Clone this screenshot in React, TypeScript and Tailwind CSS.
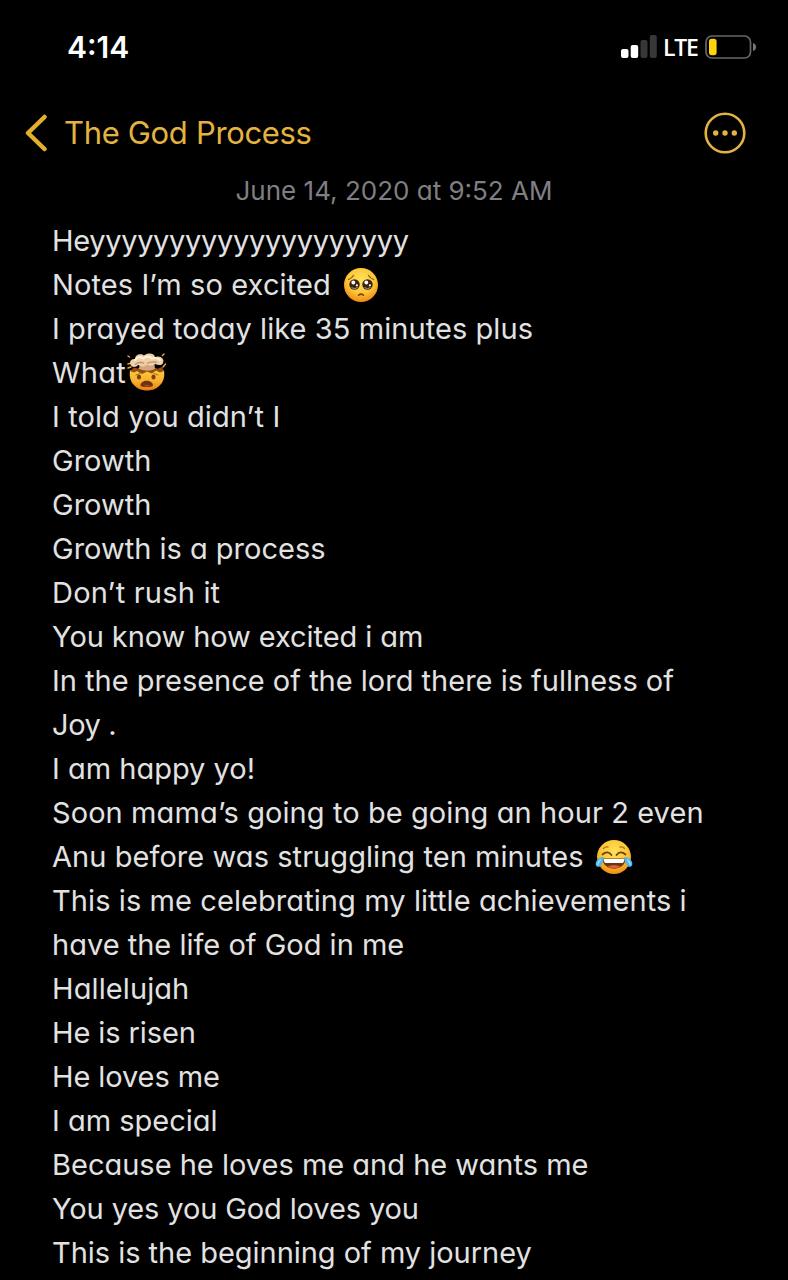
import { useId, type ReactNode } from 'react';

function Face({ children }: { children: ReactNode }) {
  const id = useId();
  return (
    <svg viewBox="0 0 36 36" className="inline-block h-9 w-9 shrink-0 overflow-visible">
      <defs>
        <radialGradient id={id} cx="0.5" cy="0.35" r="0.65">
          <stop offset="0" stopColor="#ffe25a" />
          <stop offset="0.6" stopColor="#fcc637" />
          <stop offset="1" stopColor="#f08a12" />
        </radialGradient>
      </defs>
      <circle cx="18" cy="18" r="17" fill={`url(#${id})`} />
      {children}
    </svg>
  );
}

function Pleading() {
  return (
    <Face>
      <path d="M5.500 12.500Q8.500 11.500 10.500 8.500M30.500 12.500Q27.500 11.500 25.500 8.500" stroke="#8a5210" strokeWidth="1.300" fill="none" strokeLinecap="round" />
      <circle cx="11.500" cy="17.500" r="5.200" fill="#3a2410" />
      <circle cx="24.500" cy="17.500" r="5.200" fill="#3a2410" />
      <circle cx="10.300" cy="15.500" r="1.900" fill="#fff" />
      <circle cx="23.300" cy="15.500" r="1.900" fill="#fff" />
      <circle cx="13.900" cy="18.300" r="1.100" fill="#fff" />
      <circle cx="26.900" cy="18.300" r="1.100" fill="#fff" />
      <path d="M8.500 20.500Q11.500 23 14.500 20.500M21.500 20.500Q24.500 23 27.500 20.500" stroke="#a99c90" strokeWidth="1" fill="none" />
      <path d="M15.500 28.300Q18 26 20.500 28.300" stroke="#7a3f10" strokeWidth="1.500" fill="none" strokeLinecap="round" />
    </Face>
  );
}

function MindBlown() {
  const id = useId();
  return (
    <svg viewBox="0 0 40 38" className="inline-block h-[38px] w-10 shrink-0 overflow-visible">
      <defs>
        <linearGradient id={id} x1="0" y1="0" x2="0" y2="1">
          <stop offset="0" stopColor="#ffcf40" />
          <stop offset="0.600" stopColor="#f9ae2b" />
          <stop offset="1" stopColor="#e57c12" />
        </linearGradient>
      </defs>
      <path d="M2 16.500Q20 11 36 16.500C38 28 30 36.500 19 36.500S0 28 2 16.500Z" fill={`url(#${id})`} />
      <path d="M2 17L6 13.500L11 15L15 12L24 12L29 15L34 13L36 17L32 18.500L28 16.500L24 19.500L19 17.500L14 20L9 17L6 18.500Z" fill="#8e4c16" />
      <path d="M12 7H26L27 15Q20 18.500 11 15Z" fill="#d5a67c" />
      <path d="M6 13C0 12 1 4.500 7 5C7 0.500 13-1 16 1.500C20-1.500 26-1 27 3C32 1 37 4.500 35 9C34 12 30 11 27 10C24 13 20 11 18 11C15 14 12 11.500 10 11Q9 13 6 13Z" fill="#edcfaa" />
      <path d="M7 6Q11 1.500 15 4.500Q20 0.500 24 4.500Q29 3 32 6" stroke="#fff0d4" strokeWidth="2" fill="none" strokeLinecap="round" />
      <path d="M7 10.500Q12 7 16 9.500M19 9.500Q24 7 29 8.500" stroke="#bf8960" strokeWidth="1.300" fill="none" />
      <path d="M0 2L1.500 3M36 0L34.500 1.500M0 14L3 13M35 13L37.500 10M0 10L1.500 9.500" stroke="#e8a33a" strokeWidth="1.500" strokeLinecap="round" />
      <path d="M8 21L12 19.500M26 19.500L30 21" stroke="#b06a18" strokeWidth="1" strokeLinecap="round" />
      <ellipse cx="11" cy="23" rx="2.100" ry="2.500" fill="#74400f" />
      <ellipse cx="25.500" cy="23" rx="2.100" ry="2.500" fill="#74400f" />
      <path d="M12.500 31.500C12.500 25 25 25 25 31.500C24 33.500 13.500 33.500 12.500 31.500Z" fill="#6d3413" />
      <path d="M15 31.800Q18.800 30 22.500 31.800Q18.800 33.300 15 31.800Z" fill="#a9502a" />
    </svg>
  );
}

function TearsOfJoy() {
  return (
    <Face>
      <path d="M7.500 9.500Q9 7.500 12 8M28.500 9.500Q27 7.500 24 8" stroke="#b77315" strokeWidth="1.300" fill="none" strokeLinecap="round" />
      <path d="M6.500 15.500Q11.500 11 15.500 16M20.500 16Q24.500 11 29.500 15.500" stroke="#70410f" strokeWidth="1.800" fill="none" strokeLinecap="round" />
      <path d="M6.500 19.500H29.500C29.500 33 6.500 33 6.500 19.500Z" fill="#70340f" />
      <path d="M7.500 20H28.500Q28.500 22.500 27 24H9Q7.500 22.500 7.500 20Z" fill="#fff" />
      <path d="M11.500 27.500Q18 24.500 24.500 27.500Q18 31.500 11.500 27.500Z" fill="#d9603a" />
      <path d="M7.500 18C2 18.500-1.500 23 0 26.500C2 29.500 7 28 7.500 18Z" fill="#4db7ee" />
      <path d="M28.500 18C34 18.500 37.500 23 36 26.500C34 29.500 29 28 28.500 18Z" fill="#4db7ee" />
      <path d="M1.800 25.500Q2 23 4.500 21M34.200 25.500Q34 23 31.500 21" stroke="#a6e3ff" strokeWidth="1.200" fill="none" strokeLinecap="round" />
    </Face>
  );
}

type Line = { text: string; tracking?: string; after?: ReactNode; gap?: string };

const lines: Line[] = [
  { text: 'Heyyyyyyyyyyyyyyyyyyyy', tracking: 'tracking-[-0.33px]' },
  { text: 'Notes I’m so excited', tracking: 'tracking-[0.1px]', after: <Pleading />, gap: 'gap-3' },
  { text: 'I prayed today like 35 minutes plus', tracking: 'tracking-[0.07px]' },
  { text: 'What', tracking: 'tracking-[0.25px]', after: <MindBlown />, gap: 'gap-0.5' },
  { text: 'I told you didn’t I', tracking: 'tracking-[0.1px]' },
  { text: 'Growth' },
  { text: 'Growth' },
  { text: 'Growth is a process' },
  { text: 'Don’t rush it', tracking: 'tracking-[0.2px]' },
  { text: 'You know how excited i am', tracking: 'tracking-[-0.08px]' },
  { text: 'In the presence of the lord there is fullness of' },
  { text: 'Joy .', tracking: 'tracking-[-0.4px]' },
  { text: 'I am happy yo!' },
  { text: 'Soon mama’s going to be going an hour 2 even', tracking: 'tracking-[0.08px]' },
  { text: 'Anu before was struggling ten minutes', tracking: 'tracking-[0.06px]', after: <TearsOfJoy />, gap: 'gap-3' },
  { text: 'This is me celebrating my little achievements i', tracking: 'tracking-[0.085px]' },
  { text: 'have the life of God in me' },
  { text: 'Hallelujah', tracking: 'tracking-[0.1px]' },
  { text: 'He is risen', tracking: 'tracking-[-0.1px]' },
  { text: 'He loves me', tracking: 'tracking-[-0.1px]' },
  { text: 'I am special' },
  { text: 'Because he loves me and he wants me' },
  { text: 'You yes you God loves you', tracking: 'tracking-[-0.12px]' },
  { text: 'This is the beginning of my journey', tracking: 'tracking-[-0.03px]' },
];

function StatusBar() {
  return (
    <div className="flex h-[94px] items-center justify-between pl-[67px] pr-[31px]">
      <span className="text-[30px] leading-none font-semibold text-white">4:14</span>
      <div className="flex items-center">
        <svg viewBox="0 0 36 24" className="h-6 w-9">
          <rect x="0" y="14" width="7.500" height="9" rx="2" fill="#fff" />
          <rect x="9.700" y="10" width="7.500" height="13" rx="2" fill="#fff" />
          <rect x="19.500" y="5" width="7" height="18" rx="2" fill="#373737" />
          <rect x="28.800" y="0" width="7" height="23" rx="2" fill="#373737" />
        </svg>
        <span className="ml-[6px] w-[35px] font-['Open_Sans'] text-[23px] leading-none font-semibold tracking-[-1.2px] text-white">LTE</span>
        <svg viewBox="0 0 52 24" className="ml-[7px] h-6 w-[52px]">
          <rect x="1" y="1" width="44.500" height="22" rx="6" fill="none" stroke="#68686c" strokeWidth="1.700" />
          <rect x="4" y="3.800" width="7.600" height="16.500" rx="2.800" fill="#ffd60a" />
          <path d="M48 8Q51 9 51 12T48 16Z" fill="#77777a" />
        </svg>
      </div>
    </div>
  );
}

export default function App() {
  return (
    <main className="flex h-[1280px] w-[788px] flex-col overflow-hidden bg-black font-[Inter,sans-serif]">
      <StatusBar />
      <header className="flex h-[77px] items-center justify-between pr-[42px] pl-[25px] text-[#e3b341]">
        <button className="flex items-center">
          <svg viewBox="0 0 24 38" className="h-[38px] w-6">
            <path d="M19.500 3L3 19L19.500 35" fill="none" stroke="#e2b02c" strokeWidth="4.500" strokeLinecap="round" strokeLinejoin="round" />
          </svg>
          <span className="ml-[15px] text-[31px] leading-none tracking-[-0.33px]">The God Process</span>
        </button>
        <button aria-label="More">
          <svg viewBox="0 0 42 42" className="h-[42px] w-[42px]">
            <circle cx="21" cy="21" r="19.300" fill="none" stroke="currentColor" strokeWidth="2.600" />
            <circle cx="11.700" cy="21" r="2.700" fill="currentColor" />
            <circle cx="21" cy="21" r="2.700" fill="currentColor" />
            <circle cx="30.300" cy="21" r="2.700" fill="currentColor" />
          </svg>
        </button>
      </header>
      <time className="h-12 text-center text-[26px] leading-[40px] text-[#7f7f83] [font-feature-settings:'cv11']">June 14, 2020 at 9:52 AM</time>
      <article className="pl-[52px] text-[29px] text-[#e2e2e2] [font-feature-settings:'cv11']">
        {lines.map(({ text, tracking, after, gap }, i) => (
          <p key={i} className={`flex h-11 items-center leading-[44px] whitespace-nowrap ${gap ?? ''}`}>
            <span className={tracking}>{text}</span>
            {after}
          </p>
        ))}
      </article>
    </main>
  );
}
